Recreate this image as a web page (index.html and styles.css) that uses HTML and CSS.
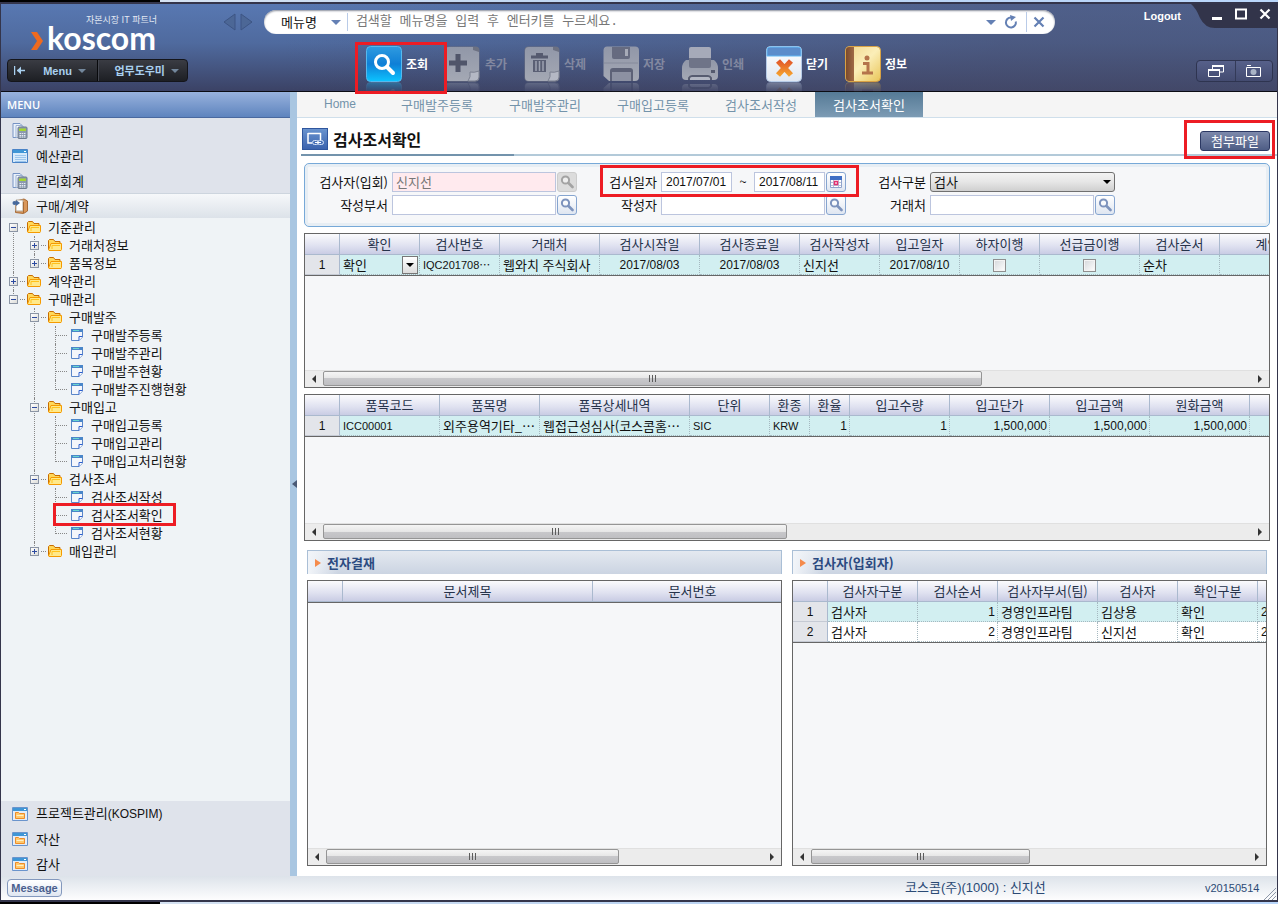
FILE: index.html
```html
<!DOCTYPE html>
<html lang="ko">
<head>
<meta charset="utf-8">
<title>검사조서확인</title>
<link rel="stylesheet" href="styles.css">
</head>
<body>
<svg class="sprite" aria-hidden="true">
  <defs>
    <linearGradient id="gBlue" x1="0" y1="0" x2="0" y2="1"><stop offset="0" stop-color="#2f9be0"/><stop offset=".5" stop-color="#0f7fd6"/><stop offset="1" stop-color="#0cc4ff"/></linearGradient>
    <linearGradient id="gGrey" x1="0" y1="0" x2="0" y2="1"><stop offset="0" stop-color="#9197a8"/><stop offset="1" stop-color="#a4a8b4"/></linearGradient>
    <linearGradient id="gGold" x1="0" y1="0" x2="1" y2="1"><stop offset="0" stop-color="#f1d58c"/><stop offset=".5" stop-color="#fbeeb8"/><stop offset="1" stop-color="#e9c558"/></linearGradient>
    <linearGradient id="gBrown" x1="0" y1="0" x2="1" y2="0"><stop offset="0" stop-color="#7a4a2c"/><stop offset="1" stop-color="#a06a45"/></linearGradient>
    <linearGradient id="gWhite" x1="0" y1="0" x2="0" y2="1"><stop offset="0" stop-color="#ffffff"/><stop offset="1" stop-color="#dfe7f2"/></linearGradient>
    <linearGradient id="gOrange" x1="0" y1="0" x2="0" y2="1"><stop offset="0" stop-color="#e2592a"/><stop offset="1" stop-color="#f5a02e"/></linearGradient>
    <linearGradient id="gTitle" x1="0" y1="0" x2="0" y2="1"><stop offset="0" stop-color="#6a94cf"/><stop offset="1" stop-color="#3a62ad"/></linearGradient>
  </defs>
  <symbol id="t-search" viewBox="0 0 36 36"><rect x=".5" y=".5" width="35" height="35" rx="4" fill="url(#gBlue)" stroke="#56b9ee"/><circle cx="16" cy="16" r="6.500" fill="none" stroke="#fff" stroke-width="3"/><path d="M21 21l6 6" stroke="#fff" stroke-width="4" stroke-linecap="round"/></symbol>
  <symbol id="t-add" viewBox="0 0 36 36"><rect x=".5" y=".5" width="34" height="35" rx="4" fill="#6c7182"/><path d="M0 5a4 4 0 0 1 4-4h24v3l6 2v19L24 35H4a4 4 0 0 1-4-4z" fill="url(#gGrey)"/><path d="M23 35q3-4 2-9 4 1 9-1v6q0 4-4 4z" fill="#b4b8c4" stroke="#7b8090"/><path d="M13 8v18M4 17h18" stroke="#50556a" stroke-width="5"/></symbol>
  <symbol id="t-trash" viewBox="0 0 36 36"><rect x=".5" y=".5" width="35" height="35" rx="4" fill="#6c7182"/><path d="M1 5a4 4 0 0 1 4-4h24v3l6 2v19L25 35H5a4 4 0 0 1-4-4z" fill="url(#gGrey)"/><path d="M24 35q3-4 2-9 4 1 9-1v6q0 4-4 4z" fill="#b4b8c4" stroke="#7b8090"/><path d="M7 11h17M12 8.500h7" stroke="#555a6f" stroke-width="3"/><path d="M9 14h13v12H9z" fill="#5a5f74"/><path d="M12 15v10M15.500 15v10M19 15v10" stroke="#9da2b1" stroke-width="1.500"/></symbol>
  <symbol id="t-save" viewBox="0 0 36 36"><path d="M4 .5h28a4 4 0 0 1 4 4V31a4 4 0 0 1-4 4H6L.5 30V4a4 4 0 0 1 3.500-3.500z" fill="url(#gGrey)"/><path d="M9 1h18v10q0 2-2 2H11q-2 0-2-2z" fill="#666b80"/><path d="M22 3h3v7h-3z" fill="#a7abb8"/><path d="M1 17h34" stroke="#858a9b"/><path d="M7 35V25q0-3 3-3h17q3 0 3 3v10z" fill="#5d6277"/><path d="M9 26h19v9H9z" fill="#8c91a2"/></symbol>
  <symbol id="t-print" viewBox="0 0 36 36"><path d="M9 1h18q2 0 2 2v12H7V3q0-2 2-2z" fill="#a6aab9"/><path d="M4 14h28q4 3 4 8v8q0 4-4 4H4q-4 0-4-4v-8q0-5 4-8z" fill="url(#gGrey)"/><path d="M7 12h22v8q0 2-2 2H9q-2 0-2-2z" fill="#6f7488"/><path d="M7 34v-2q1-2 3-2h16q2 0 3 2v2" fill="#b4b8c4" stroke="#575c70" stroke-width="2"/><path d="M29 24h4v3h-4z" fill="#555a6e"/></symbol>
  <symbol id="t-close" viewBox="0 0 36 36"><rect x=".5" y=".5" width="35" height="35" rx="4" fill="url(#gWhite)" stroke="#b7cce8"/><path d="M1 10V4q0-3 3-3h28q3 0 3 3v6z" fill="#5b8ccb" stroke="#63b8f4"/><path d="M12 15l13 14M25 15L12 29" stroke="url(#gOrange)" stroke-width="5.500"/></symbol>
  <symbol id="t-info" viewBox="0 0 36 36"><rect x=".5" y=".5" width="35" height="35" rx="4" fill="url(#gGold)" stroke="#d9a243"/><path d="M9 1v34H4q-3 0-3-3V4q0-3 3-3z" fill="url(#gBrown)"/><circle cx="22" cy="12" r="2.500" fill="#b5744b"/><path d="M18 17.500h5V26M17 27h11" stroke="#b5744b" stroke-width="3" fill="none"/></symbol>
  <symbol id="i-calc" viewBox="0 0 16 16"><path d="M1 .5h7l3 3v11H1z" fill="#eaf1fb" stroke="#7693c4"/><path d="M4 2.500h6v12H4z" fill="#f7faff" stroke="#9bb0d2"/><rect x="6" y="4" width="9" height="11.500" rx="1" fill="#8c9aae" stroke="#6f7c90"/><path d="M7 5.500h7v2.500H7z" fill="#a5d631"/><path d="M7.500 10.500h6M7.500 12.500h6M7.500 14h6" stroke="#e6ebf2" stroke-dasharray="1.500 .7"/></symbol>
  <symbol id="i-list" viewBox="0 0 16 16"><path d="M.5 1.500h15v13H.5z" fill="#d6eafb" stroke="#4a83c6"/><path d="M1 2h14v3H1z" fill="#3f96d6"/><path d="M12 3.500h2" stroke="#fff"/><path d="M3 7.500h11M3 9.500h11M3 11.500h11M3 13.500h11" stroke="#9cc5ec"/></symbol>
  <symbol id="i-box" viewBox="0 0 16 16"><path d="M4 3l8-2 3.500 2v10l-4 2.500-8-1z" fill="#d9975a" stroke="#a86a35"/><path d="M4 2h7v11H4z" fill="#fff" stroke="#b4a899"/><path d="M11.500 4v11" stroke="#a86a35"/><path d="M4 2l4 3-4 3z" fill="#47699d"/><circle cx="2.500" cy="5" r="2" fill="#47699d"/></symbol>
  <symbol id="i-win" viewBox="0 0 16 16"><path d="M.5 1.500h15v13H.5z" fill="#e3edf9" stroke="#6a94cc"/><path d="M1 2h14v3H1z" fill="#3f96d6"/><path d="M12 3.500h2" stroke="#fff"/><path d="M3.500 12.500v-6h3l1 1h5v5z" fill="#ffc96d" stroke="#ee8d2a"/><path d="M4.500 9.500h7" stroke="#fff1c6"/></symbol>
  <symbol id="i-folder" viewBox="0 0 14 12"><path d="M.5 11V1.500L1.500.5h4l1.500 2h5v2" fill="#ffd85a" stroke="#c96d00"/><path d="M.5 11L3 4.500h10.500v6l-.5 1H1z" fill="#ffe98a" stroke="#f59a00"/><path d="M4 10V6.500h8" stroke="#ffc21c" fill="none"/></symbol>
  <symbol id="i-doc" viewBox="0 0 12 12"><path d="M.5.5h11V8L8 11.500H.5z" fill="#f4f6fb" stroke="#5a86c8"/><path d="M0 0h12v3H0z" fill="#4a86c9"/><path d="M2 1.500h6" stroke="#68d5cf"/><path d="M11.500 7.500H8v4" fill="#fff" stroke="#2c5fce"/></symbol>
  <symbol id="i-mag" viewBox="0 0 14 14"><circle cx="5.500" cy="5" r="3.600" fill="#fff" fill-opacity=".5" stroke="currentColor" stroke-width="2"/><path d="M8.500 8l4 4" stroke="currentColor" stroke-width="2.600" stroke-linecap="round"/></symbol>
  <symbol id="i-cal" viewBox="0 0 14 14"><path d="M1.500 1.500h11v11h-11z" fill="#fff" stroke="#8fa3cc"/><path d="M1 1h12v4H1z" fill="#3f6fc4"/><path d="M2 7.500h10M2 10.500h10M4.500 5v7M9.500 5v7" stroke="#b8c2da"/><path d="M5.500 6.500h3v3h-3z" fill="#fff" stroke="#e2326f" stroke-width="1.500"/></symbol>
  <symbol id="i-grip" viewBox="0 0 9 7"><path d="M1.500 0v7M4.500 0v7M7.500 0v7" stroke="#5c5c5c"/></symbol>
  <symbol id="i-left" viewBox="0 0 4 8"><path d="M4 0v8L0 4z" fill="#333"/></symbol>
  <symbol id="i-right" viewBox="0 0 4 8"><path d="M0 0v8l4-4z" fill="#333"/></symbol>
</svg>

<div class="window">
  <header class="header">
    <div class="brand">
      <div class="slogan">자본시장 IT 파트너</div>
      <div class="logo"><svg width="13" height="18" viewBox="0 0 13 18"><path d="M0 0h6l6 9-6 9H0l6-9z" fill="#ee6a1f"/></svg><span>koscom</span></div>
      <div class="pills">
        <button class="pill pill-menu" type="button"><svg width="11" height="9" viewBox="0 0 11 9"><path d="M.5 0v9M3 4.500h8" stroke="#a9d0ef" stroke-width="1.500"/><path d="M3 4.500L7 .5v8z" fill="#a9d0ef"/></svg><span>Menu</span><i class="caret"></i></button>
        <button class="pill pill-help" type="button"><span>업무도우미</span><i class="caret"></i></button>
      </div>
    </div>

    <div class="center">
      <div class="search-row">
        <div class="history">
          <button type="button" aria-label="이전"><svg width="13" height="18" viewBox="0 0 13 18"><path d="M12 1v16L1 9z" fill="#4c6796" stroke="#3d5584"/></svg></button>
          <button type="button" aria-label="다음"><svg width="13" height="18" viewBox="0 0 13 18"><path d="M1 1v16l11-8z" fill="#4c6796" stroke="#3d5584"/></svg></button>
        </div>
        <div class="search">
          <button class="search-kind" type="button">메뉴명<i class="tri"></i></button>
          <input type="text" aria-label="메뉴 검색" placeholder="검색할 메뉴명을 입력 후 엔터키를 누르세요.">
          <button type="button" aria-label="목록"><i class="tri"></i></button>
          <button type="button" aria-label="새로고침"><svg width="14" height="14" viewBox="0 0 14 14"><path d="M7 2.500a5 5 0 1 0 4.800 4" fill="none" stroke="#6480b4" stroke-width="2"/><path d="M6 0l6 2-5 4z" fill="#6480b4"/></svg></button>
          <button class="search-clear" type="button" aria-label="지우기"><svg width="12" height="12" viewBox="0 0 12 12"><path d="M1.500 1.500l9 9M10.500 1.500l-9 9" stroke="#6480b4" stroke-width="2.200"/></svg></button>
        </div>
      </div>
      <nav class="tools">
        <button class="tool marked" type="button"><svg><use href="#t-search"/></svg><span>조회</span></button>
        <button class="tool off" type="button"><svg><use href="#t-add"/></svg><span>추가</span></button>
        <button class="tool off" type="button"><svg><use href="#t-trash"/></svg><span>삭제</span></button>
        <button class="tool off" type="button"><svg><use href="#t-save"/></svg><span>저장</span></button>
        <button class="tool off" type="button"><svg><use href="#t-print"/></svg><span>인쇄</span></button>
        <button class="tool tool-close" type="button"><svg><use href="#t-close"/></svg><span>닫기</span></button>
        <button class="tool" type="button"><svg><use href="#t-info"/></svg><span>정보</span></button>
      </nav>
    </div>

    <div class="corner">
      <div class="corner-top">
        <a class="logout" href="#">Logout</a>
        <div class="controls">
          <svg class="controls-bg" viewBox="0 0 86 24" preserveAspectRatio="none"><path d="M0 0h86v24H24Q14 24 9 14 5 4 0 0z" fill="#32344a"/></svg>
          <button type="button" aria-label="최소화"><svg width="12" height="12" viewBox="0 0 12 12"><path d="M1 10.500h10" stroke="#fff" stroke-width="3"/></svg></button>
          <button type="button" aria-label="최대화"><svg width="12" height="12" viewBox="0 0 12 12"><path d="M1 1.500h10v9H1z" fill="none" stroke="#fff" stroke-width="2"/></svg></button>
          <button type="button" aria-label="창 닫기"><svg width="12" height="12" viewBox="0 0 12 12"><path d="M1.500 1.500l9 9M10.500 1.500l-9 9" stroke="#fff" stroke-width="2.200"/></svg></button>
        </div>
      </div>
      <div class="views">
        <button type="button" aria-label="창 배열"><svg width="16" height="12" viewBox="0 0 16 12"><path d="M4.500 4V1h11v6H12" fill="none" stroke="#fff"/><path d="M4 1h12M0 5h12" stroke="#fff" stroke-width="2"/><path d="M.5 5v6.500h11V5" fill="none" stroke="#fff"/></svg></button>
        <button type="button" aria-label="화면 캡처"><svg width="16" height="12" viewBox="0 0 16 12"><path d="M.5 2.500h14v9H.5zM1 .5h4" fill="none" stroke="#fff"/><circle cx="7.500" cy="7" r="3" fill="#a9b4c6"/></svg></button>
      </div>
    </div>
  </header>

  <div class="body">
    <aside class="sidebar">
      <h2 class="side-head">MENU</h2>
      <ul class="modules">
        <li><a href="#"><svg><use href="#i-calc"/></svg>회계관리</a></li>
        <li><a href="#"><svg><use href="#i-list"/></svg>예산관리</a></li>
        <li><a href="#"><svg><use href="#i-calc"/></svg>관리회계</a></li>
        <li><a class="open" href="#"><svg><use href="#i-box"/></svg>구매/계약</a></li>
      </ul>
      <ul class="tree">
        <li><a href="#"><i class="box minus"></i><svg class="folder"><use href="#i-folder"/></svg>기준관리</a>
          <ul>
            <li><a href="#"><i class="box plus"></i><svg class="folder"><use href="#i-folder"/></svg>거래처정보</a></li>
            <li><a href="#"><i class="box plus"></i><svg class="folder"><use href="#i-folder"/></svg>품목정보</a></li>
          </ul>
        </li>
        <li><a href="#"><i class="box plus"></i><svg class="folder"><use href="#i-folder"/></svg>계약관리</a></li>
        <li><a href="#"><i class="box minus"></i><svg class="folder"><use href="#i-folder"/></svg>구매관리</a>
          <ul>
            <li><a href="#"><i class="box minus"></i><svg class="folder"><use href="#i-folder"/></svg>구매발주</a>
              <ul>
                <li><a class="leaf" href="#"><svg class="doc"><use href="#i-doc"/></svg>구매발주등록</a></li>
                <li><a class="leaf" href="#"><svg class="doc"><use href="#i-doc"/></svg>구매발주관리</a></li>
                <li><a class="leaf" href="#"><svg class="doc"><use href="#i-doc"/></svg>구매발주현황</a></li>
                <li><a class="leaf" href="#"><svg class="doc"><use href="#i-doc"/></svg>구매발주진행현황</a></li>
              </ul>
            </li>
            <li><a href="#"><i class="box minus"></i><svg class="folder"><use href="#i-folder"/></svg>구매입고</a>
              <ul>
                <li><a class="leaf" href="#"><svg class="doc"><use href="#i-doc"/></svg>구매입고등록</a></li>
                <li><a class="leaf" href="#"><svg class="doc"><use href="#i-doc"/></svg>구매입고관리</a></li>
                <li><a class="leaf" href="#"><svg class="doc"><use href="#i-doc"/></svg>구매입고처리현황</a></li>
              </ul>
            </li>
            <li><a href="#"><i class="box minus"></i><svg class="folder"><use href="#i-folder"/></svg>검사조서</a>
              <ul>
                <li><a class="leaf" href="#"><svg class="doc"><use href="#i-doc"/></svg>검사조서작성</a></li>
                <li><a class="leaf marked" href="#"><svg class="doc"><use href="#i-doc"/></svg>검사조서확인</a></li>
                <li><a class="leaf" href="#"><svg class="doc"><use href="#i-doc"/></svg>검사조서현황</a></li>
              </ul>
            </li>
            <li><a href="#"><i class="box plus"></i><svg class="folder"><use href="#i-folder"/></svg>매입관리</a></li>
          </ul>
        </li>
      </ul>
      <ul class="modules">
        <li><a href="#"><svg><use href="#i-win"/></svg><span>프로젝트관리<span class="lat">(KOSPIM)</span></span></a></li>
        <li><a href="#"><svg><use href="#i-win"/></svg>자산</a></li>
        <li><a href="#"><svg><use href="#i-win"/></svg>감사</a></li>
      </ul>
    </aside>
    <div class="splitter"><svg width="5" height="8" viewBox="0 0 5 8"><path d="M5 0v8L0 4z" fill="#4a5a76"/></svg></div>

    <main class="main">
      <nav class="tabs">
        <a class="home lat" href="#">Home</a>
        <a href="#">구매발주등록</a>
        <a href="#">구매발주관리</a>
        <a href="#">구매입고등록</a>
        <a href="#">검사조서작성</a>
        <a class="active" href="#">검사조서확인</a>
      </nav>
      <div class="title-bar">
        <svg width="26" height="22" viewBox="0 0 26 22"><rect x=".5" y=".5" width="25" height="21" fill="url(#gTitle)" stroke="#2f569e"/><path d="M6 5.500h13M6 5v10h4M18.500 5v7" fill="none" stroke="#fff" stroke-width="1.500"/><rect x="10.500" y="12.500" width="6" height="4" rx="2" fill="none" stroke="#d5e3f7"/><rect x="15.500" y="12.500" width="6" height="4" rx="2" fill="none" stroke="#d5e3f7"/><path d="M13 14.500h6" stroke="#fff"/></svg>
        <h1>검사조서확인</h1>
        <button class="attach marked" type="button">첨부파일</button>
      </div>

      <form class="filter">
        <div class="field"><label for="f1">검사자(입회)</label><input id="f1" class="locked" type="text" value="신지선"><button class="pick off" type="button" aria-label="검사자 찾기"><svg><use href="#i-mag"/></svg></button></div>
        <div class="field dates marked"><label for="f2">검사일자</label><input id="f2" class="date lat" type="text" value="2017/07/01"><span>~</span><input class="date lat" type="text" aria-label="종료일" value="2017/08/11"><button class="pick" type="button" aria-label="달력"><svg><use href="#i-cal"/></svg></button></div>
        <div class="field"><label for="f3">검사구분</label><span class="select"><select id="f3"><option>검사</option></select></span></div>
        <div class="field"><label for="f4">작성부서</label><input id="f4" type="text"><button class="pick" type="button" aria-label="작성부서 찾기"><svg><use href="#i-mag"/></svg></button></div>
        <div class="field"><label for="f5">작성자</label><input id="f5" type="text"><button class="pick" type="button" aria-label="작성자 찾기"><svg><use href="#i-mag"/></svg></button></div>
        <div class="field"><label for="f6">거래처</label><input id="f6" type="text"><button class="pick" type="button" aria-label="거래처 찾기"><svg><use href="#i-mag"/></svg></button></div>
      </form>

      <section class="grid grid-a">
        <div class="grid-view">
          <table>
            <colgroup><col class="c35"><col class="c80"><col class="c80"><col class="c100"><col class="c100"><col class="c100"><col class="c80"><col class="c80"><col class="c80"><col class="c100"><col class="c80"><col class="c120"></colgroup>
            <thead><tr><th></th><th>확인</th><th>검사번호</th><th>거래처</th><th>검사시작일</th><th>검사종료일</th><th>검사작성자</th><th>입고일자</th><th>하자이행</th><th>선급금이행</th><th>검사순서</th><th>계약번호</th></tr></thead>
            <tbody><tr class="on"><th class="lat">1</th><td><div class="combo">확인<button type="button" aria-label="확인 선택"><i></i></button></div></td><td class="code">IQC201708⋯</td><td>웹와치 주식회사</td><td class="mid lat">2017/08/03</td><td class="mid lat">2017/08/03</td><td>신지선</td><td class="mid lat">2017/08/10</td><td class="mid"><input type="checkbox" aria-label="하자이행"></td><td class="mid"><input type="checkbox" aria-label="선급금이행"></td><td>순차</td><td></td></tr></tbody>
          </table>
        </div>
        <div class="scroll"><button type="button" aria-label="왼쪽"><svg><use href="#i-left"/></svg></button><div class="track"><div class="thumb" style="width:71%"><svg><use href="#i-grip"/></svg></div></div><button type="button" aria-label="오른쪽"><svg><use href="#i-right"/></svg></button></div>
      </section>

      <section class="grid grid-b">
        <div class="grid-view">
          <table>
            <colgroup><col class="c35"><col class="c100"><col class="c100"><col class="c150"><col class="c80"><col class="c40"><col class="c40"><col class="c100"><col class="c100"><col class="c100"><col class="c100"><col class="c100"></colgroup>
            <thead><tr><th></th><th>품목코드</th><th>품목명</th><th>품목상세내역</th><th>단위</th><th>환종</th><th>환율</th><th>입고수량</th><th>입고단가</th><th>입고금액</th><th>원화금액</th><th></th></tr></thead>
            <tbody><tr class="on"><th class="lat">1</th><td class="code">ICC00001</td><td>외주용역기타_⋯</td><td>웹접근성심사(코스콤홈⋯</td><td class="code">SIC</td><td class="code">KRW</td><td class="num">1</td><td class="num">1</td><td class="num">1,500,000</td><td class="num">1,500,000</td><td class="num">1,500,000</td><td></td></tr></tbody>
          </table>
        </div>
        <div class="scroll"><button type="button" aria-label="왼쪽"><svg><use href="#i-left"/></svg></button><div class="track"><div class="thumb" style="width:50%"><svg><use href="#i-grip"/></svg></div></div><button type="button" aria-label="오른쪽"><svg><use href="#i-right"/></svg></button></div>
      </section>

      <div class="pair">
        <section class="panel">
          <h3>전자결재</h3>
          <div class="grid">
            <div class="grid-view">
              <table>
                <colgroup><col class="c35"><col class="c250"><col class="c200"></colgroup>
                <thead><tr><th></th><th>문서제목</th><th>문서번호</th></tr></thead>
              </table>
            </div>
            <div class="scroll"><button type="button" aria-label="왼쪽"><svg><use href="#i-left"/></svg></button><div class="track"><div class="thumb" style="width:67%"><svg><use href="#i-grip"/></svg></div></div><button type="button" aria-label="오른쪽"><svg><use href="#i-right"/></svg></button></div>
          </div>
        </section>
        <section class="panel">
          <h3>검사자(입회자)</h3>
          <div class="grid">
            <div class="grid-view">
              <table>
                <colgroup><col class="c35"><col class="c90"><col class="c80"><col class="c100"><col class="c80"><col class="c80"><col class="c100"></colgroup>
                <thead><tr><th></th><th>검사자구분</th><th>검사순서</th><th>검사자부서(팀)</th><th>검사자</th><th>확인구분</th><th></th></tr></thead>
                <tbody>
                  <tr class="on"><th class="lat">1</th><td>검사자</td><td class="num">1</td><td>경영인프라팀</td><td>김상용</td><td>확인</td><td class="lat">2017</td></tr>
                  <tr><th class="lat">2</th><td>검사자</td><td class="num">2</td><td>경영인프라팀</td><td>신지선</td><td>확인</td><td class="lat">2017</td></tr>
                </tbody>
              </table>
            </div>
            <div class="scroll"><button type="button" aria-label="왼쪽"><svg><use href="#i-left"/></svg></button><div class="track"><div class="thumb" style="width:50%"><svg><use href="#i-grip"/></svg></div></div><button type="button" aria-label="오른쪽"><svg><use href="#i-right"/></svg></button></div>
          </div>
        </section>
      </div>
    </main>
  </div>

  <footer class="status">
    <button type="button">Message</button>
    <span class="user">코스콤(주)(1000) : 신지선</span>
    <span class="version">v20150514</span>
    <svg width="12" height="12" viewBox="0 0 12 12"><path d="M0 12L12 0M4 12l8-8M8 12l4-4" stroke="#8d97a8"/></svg>
  </footer>
</div>
</body>
</html>
```

FILE: styles.css
```css
* { box-sizing: border-box; }

body {
  margin: 0;
  min-height: 100vh;
  display: flex;
  padding: 2px 0;
  background: linear-gradient(90deg, #000 160px, #d5e2f2 160px, #bcd4f2 640px, #b9d6fb);
  font: 13px/18px "Noto Sans CJK KR", sans-serif;
  color: #111;
}

button, input, select { font: inherit; color: inherit; margin: 0; padding: 0; }
button { border: 0; background: none; }
a { color: inherit; text-decoration: none; }
ul { list-style: none; margin: 0; padding: 0; }
h1, h2, h3 { margin: 0; }
svg { display: block; flex: none; }
.sprite { position: absolute; width: 0; height: 0; }

/* narrow latin text and figures */
.lat, .num, .code { font-family: "Liberation Sans", "Noto Sans CJK KR", sans-serif; font-size: 12px; }
.code { font-size: 11px; }

.window {
  flex: 1;
  min-width: 0;
  display: flex;
  flex-direction: column;
  border: solid #34354b;
  border-width: 2px 1px;
  background: #fff;
}

/* red call-out frames drawn over the screen */
.marked { position: relative; }
.marked::after {
  content: "";
  position: absolute;
  z-index: 2;
  border: 3px solid #ed1c24;
  pointer-events: none;
}

/* header */
.header {
  display: grid;
  grid-template-columns: 221px 1fr 222px;
  height: 88px;
  border-bottom: 1px solid #0b0c14;
  background:
    linear-gradient(90deg, transparent 280px, rgba(72, 76, 106, .55) 1000px),
    linear-gradient(#5878b2, #4f6a9e 45%, #3b4265);
}
.brand { display: flex; flex-direction: column; padding: 10px 0 0 6px; }
.slogan { width: 150px; text-align: right; color: #e3e9f3; font-size: 9px; line-height: 12px; }
.logo {
  display: flex;
  align-items: center;
  gap: 3px;
  height: 24px;
  padding-left: 24px;
  color: #fff;
  font: bold 32px/24px Lato, sans-serif;
}
.logo svg { margin-top: 6px; }
.pills {
  display: flex;
  width: 181px;
  height: 23px;
  margin-top: 9px;
  border: 1px solid #14151b;
  border-radius: 4px;
  background: linear-gradient(#3a3c43, #1d1f24);
}
.pill { display: flex; align-items: center; color: #a9d0ef; font: bold 11px/20px "Liberation Sans", "Noto Sans CJK KR", sans-serif; }
.pill-menu { width: 90px; padding: 0 11px 0 6px; justify-content: space-between; border-right: 1px solid #08090c; }
.pill-menu span { margin-left: 12px; }
.pill-help { flex: 1; justify-content: flex-end; gap: 6px; padding-right: 8px; border-left: 1px solid #43464f; }
.caret { border: 4px solid transparent; border-top-color: #73879c; border-bottom: 0; }

.center { display: flex; flex-direction: column; min-width: 0; }
.search-row { display: flex; gap: 11px; padding-top: 6px; }
.history { display: flex; gap: 4px; align-items: center; padding-left: 1px; }
.search {
  flex: 1;
  min-width: 0;
  display: flex;
  align-items: center;
  height: 24px;
  padding: 0 10px 0 17px;
  border-radius: 12px;
  background: #fff;
  box-shadow: inset 0 1px 2px #8a8f9c;
}
.search-kind { display: flex; align-items: center; gap: 14px; padding-right: 6px; border-right: 1px solid #b9cbe8; }
.tri { display: block; border: 5px solid transparent; border-top-color: #6480b4; border-bottom: 0; }
.search input { flex: 1; min-width: 0; border: 0; outline: 0; padding-left: 8px; background: none; font-family: "Liberation Mono", "Noto Sans CJK KR", monospace; }
.search input::placeholder { color: #777; opacity: 1; }
.search > button + button { margin-left: 8px; }
.search-clear { padding-left: 6px; border-left: 1px solid #b9cbe8; height: 20px; }

.tools { display: flex; padding: 12px 0 0 144px; }
.tool {
  display: flex;
  align-items: center;
  gap: 4px;
  width: 79px;
  height: 36px;
  color: #fff;
  font-size: 12px;
  font-weight: bold;
}
.tool svg { width: 36px; height: 36px; -webkit-box-reflect: below 0 linear-gradient(transparent 70%, rgba(0, 0, 0, .35)); }
.tool.off { color: #8288a0; }
.tool-close { margin-left: 5px; }
.tool.marked::after { inset: -4px -2px -12px -11px; }

.corner { display: flex; flex-direction: column; align-items: flex-end; }
.corner-top { display: flex; align-items: flex-start; }
.logout { padding: 3px 10px 0 0; color: #fff; font: bold 11px/18px "Liberation Sans", sans-serif; }
.controls { position: relative; display: flex; gap: 12px; width: 86px; height: 24px; justify-content: flex-end; align-items: center; padding: 0 6px 4px 0; }
.controls-bg { position: absolute; inset: 0; width: 100%; height: 100%; }
.controls button { position: relative; }
.views { display: flex; margin: 32px 4px 0 0; border: 1px solid #2e3450; border-radius: 4px; background: linear-gradient(#56608a, #434b70); }
.views button { display: grid; place-items: center; width: 38px; height: 20px; }
.views button + button { width: 37px; border-left: 1px solid #333a58; }

.body { flex: 1; display: flex; min-height: 0; }

/* sidebar */
.sidebar { display: flex; flex-direction: column; width: 289px; background: #eff3f6; }
.side-head {
  height: 26px;
  padding-left: 6px;
  border-bottom: 1px solid #49699f;
  background: linear-gradient(#98b2dd, #5e84be);
  color: #fff;
  font: 600 11px/26px "Open Sans", sans-serif;
}
.modules { background: #dfe3eb; }
.modules a { display: flex; align-items: center; gap: 8px; height: 25px; padding-left: 11px; }
.modules svg { width: 16px; height: 16px; }
.modules .open { border-top: 1px solid #cdd5de; background: linear-gradient(#f6f8fa, #dce2e9); }

.tree { flex: 1; padding-left: 8px; }
.tree ul { margin-left: 21px; }
.tree li { position: relative; }
.tree li::before { content: ""; position: absolute; left: 4px; top: 0; bottom: 0; border-left: 1px dotted #888; }
.tree li:last-child::before { bottom: auto; height: 10px; }
.tree > li:first-child::before { top: 10px; }
.tree a { display: flex; align-items: center; width: max-content; height: 18px; }
.box { position: relative; width: 9px; height: 9px; margin-right: 9px; border: 1px solid #8b95a5; background: linear-gradient(135deg, #fff, #dcdcd8); }
.box::before, .plus::after { content: ""; position: absolute; left: 1px; top: 3px; width: 5px; height: 1px; background: #2c4aa0; }
.plus::after { transform: rotate(90deg); }
.tree .folder { width: 14px; height: 12px; margin-right: 7px; }
.tree a:not(.leaf) { background: linear-gradient(90deg, #888 50%, transparent 50%) 10px 9px / 2px 1px repeat-x; background-clip: content-box; background-size: 2px 1px; }
.tree .leaf::before { content: ""; width: 11px; margin: 0 4px 0 5px; border-top: 1px dotted #888; }
.tree a:not(.leaf) { background: linear-gradient(#888, #888) 11px 9px / 1px 1px no-repeat, linear-gradient(#888, #888) 13px 9px / 1px 1px no-repeat, linear-gradient(#888, #888) 15px 9px / 1px 1px no-repeat; }
.tree .doc { width: 12px; height: 12px; margin-right: 8px; }
.leaf.marked::after { inset: -3px -13px -2px 2px; }

.splitter { display: grid; place-items: center end; width: 7px; background: #a9c6e1; }

/* main */
.main { flex: 1; min-width: 0; display: flex; flex-direction: column; }
.tabs { display: flex; height: 26px; border-bottom: 1px solid #cfdfeb; background: #f5f5f5; color: #7393aa; line-height: 25px; text-align: center; }
.tabs a { width: 108px; }
.tabs .home { width: 86px; }
.tabs .active { background: linear-gradient(#557a96, #7c9bb4); color: #fff; }

.title-bar {
  display: flex;
  align-items: center;
  height: 38px;
  margin-left: 4px;
  padding: 4px 7px 0 1px;
  background:
    linear-gradient(#7393ac, #7393ac) 0 100% / 213px 2px no-repeat,
    linear-gradient(#b3cad9, #b3cad9) 0 100% / 100% 2px no-repeat;
}
.title-bar h1 { margin-left: 5px; font-size: 16px; line-height: 20px; }
.attach {
  width: 70px;
  height: 20px;
  margin: 4px 0 0 auto;
  border: 1px solid #2b3863;
  border-radius: 3px;
  background: linear-gradient(#7d89ab, #4e5d85);
  color: #fff;
  line-height: 16px;
}
.attach.marked::after { inset: -12px -6px -9px -17px; }

.filter {
  display: grid;
  grid-template-columns: repeat(3, 269px);
  gap: 1px 0;
  margin: 7px 7px 0;
  padding: 6px 0 11px 3px;
  border: 1px solid #77a9d8;
  border-radius: 5px;
  background: #f6f7f9;
  box-shadow: inset 0 0 0 3px #e7eef4;
}
.field { display: flex; align-items: center; height: 22px; padding-top: 1px; }
.field label { width: 80px; margin-right: 4px; text-align: right; white-space: nowrap; }
.field input { flex: 1; min-width: 0; height: 20px; padding: 0 3px; border: 1px solid #bcc5de; border-radius: 0; background: #fff; }
.field .locked { background: #ffeaee; color: #777; }
.field .date { flex: none; width: 71px; padding: 0 4px; }
.field span { flex: 1; text-align: center; }
.pick { display: grid; place-items: center; width: 20px; height: 20px; margin-left: 1px; border: 1px solid #86a5d0; border-radius: 3px; background: linear-gradient(#fff, #dfe6f1); color: #7d93bd; }
.pick svg { width: 14px; height: 14px; }
.pick.off { border-color: #ccc; background: #dcdcdc; color: #a3a3a3; }
.dates.marked::after { inset: -5px -13px -5px 23px; }
.field .select { position: relative; display: flex; height: 20px; }
.field select { appearance: none; flex: 1; padding: 0 3px; border: 1px solid #707070; border-radius: 3px; background: linear-gradient(#f3f3f3, #e6e6e6 50%, #cfcfcf); }
.select::after { content: ""; position: absolute; right: 4px; top: 8px; border: 4px solid transparent; border-top-color: #000; border-bottom: 0; }

/* data grids */
.grid { display: flex; flex-direction: column; border: 1px solid #666; background: #f6f7f9; }
.grid-a { height: 155px; margin: 6px 7px 0; }
.grid-b { height: 147px; margin: 6px 7px 0; }
.grid-view { flex: 1; min-height: 0; overflow: hidden; }
table { width: 0; table-layout: fixed; border-collapse: separate; border-spacing: 0; border-bottom: 1px solid #666; }
.c35 { width: 35px; }
.c40 { width: 40px; }
.c80 { width: 80px; }
.c90 { width: 90px; }
.c100 { width: 100px; }
.c120 { width: 120px; }
.c150 { width: 150px; }
.c200 { width: 200px; }
.c250 { width: 250px; }
th, td { overflow: hidden; height: 20px; padding: 0 3px; white-space: nowrap; font-weight: normal; line-height: 18px; text-align: left; }
thead th { padding: 0; height: 21px; border-right: 1px solid #aab9ce; border-bottom: 1px solid #aab9ce; background: linear-gradient(#fbfbfd, #dfe1f0 60%, #c9cce4); color: #26324a; text-align: center; }
tbody th { border-right: 1px solid #aab9ce; border-bottom: 1px solid #c5cad4; background: #e3e5ea; text-align: center; }
td { border-right: 1px dotted #a5b8c0; border-bottom: 1px dotted #a5b8c0; background: #fff; }
.on td { background: #d2eff1; }
.mid { text-align: center; }
.num { padding-right: 2px; text-align: right; }
.combo { display: flex; justify-content: space-between; height: 18px; margin-right: -2px; }
.combo button { display: grid; place-items: center; width: 16px; height: 18px; border: 1px solid #777; background: linear-gradient(#fff, #ddd); }
.combo i { border: 4px solid transparent; border-top-color: #000; border-bottom: 0; }
td input { appearance: none; display: block; width: 13px; height: 13px; margin: 1px auto 0; border: 1px solid #8f8f8f; background: linear-gradient(135deg, #d4d7da, #fff); box-shadow: inset 0 0 0 1px #f4f4f4; }

.scroll { display: flex; height: 17px; border-top: 1px solid #e0e0e0; background: #ececec; }
.scroll button { display: grid; place-items: center; width: 18px; }
.scroll button svg { width: 4px; height: 8px; }
.track { flex: 1; }
.thumb { display: grid; place-items: center; height: 15px; border: 1px solid #959595; border-radius: 2px; background: linear-gradient(#f5f5f5, #e6e6e6 50%, #c8c8cb 50%, #bfbfc2); }
.thumb svg { width: 9px; height: 7px; }

.pair { flex: 1; display: grid; grid-template-columns: 1fr 1fr; gap: 10px; margin: 9px 10px 10px; }
.panel { display: flex; flex-direction: column; min-width: 0; }
.panel h3 {
  display: flex;
  align-items: center;
  gap: 6px;
  height: 24px;
  margin-bottom: 6px;
  padding-left: 7px;
  border: 1px solid #aabfd6;
  border-bottom: 0;
  background: linear-gradient(90deg, #f2f5f9, transparent 30px), linear-gradient(#e4e9f0, #cbd4e2);
  color: #2b4a80;
  font-size: 13px;
}
.panel h3::before { content: ""; border: 4px solid transparent; border-left: 6px solid #f58b4c; border-right: 0; }
.panel .grid { flex: 1; }

/* status bar */
.status { display: flex; align-items: center; height: 24px; padding: 0 1px 0 6px; background: linear-gradient(#dde3ea, #fdfdfe); color: #2b4a75; }
.status button { width: 55px; height: 18px; border: 1px solid #8398bd; border-radius: 4px; background: linear-gradient(#fff, #dfe6f1); color: #4a5f8e; font: bold 11px/14px "Liberation Sans", sans-serif; }
.user { width: 150px; margin: 0 150px 0 auto; white-space: nowrap; font-family: "Liberation Sans", "Noto Sans CJK KR", sans-serif; }
.version { width: 55px; margin-right: 4px; font: 11px/18px "Liberation Sans", sans-serif; }
.status svg { align-self: flex-end; }
```
